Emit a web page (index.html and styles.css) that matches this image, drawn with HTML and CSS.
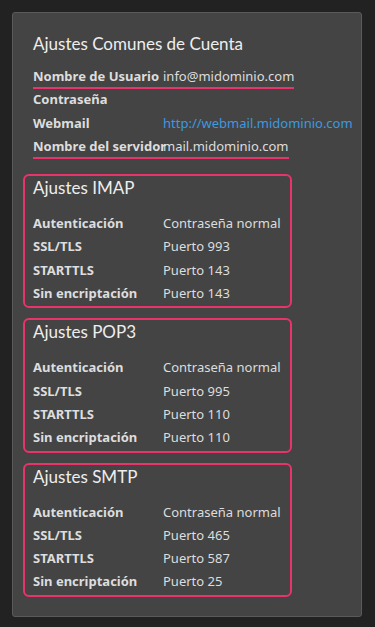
FILE: index.html
```html
<!DOCTYPE html>
<html lang="es">
<head>
  <meta charset="UTF-8">
  <title>Ajustes de Cuenta</title>
  <link rel="stylesheet" href="styles.css">
</head>
<body>

<div class="card">
  <h2>Ajustes Comunes de Cuenta</h2>
  <div class="row marked"><span class="label">Nombre de Usuario</span><span>info@midominio.com</span></div>
  <div class="row"><span class="label">Contraseña</span><span></span></div>
  <div class="row"><span class="label">Webmail</span><a href="#">http://webmail.midominio.com</a></div>
  <div class="row marked"><span class="label">Nombre del servidor</span><span>mail.midominio.com</span></div>

  <div class="box">
    <h3>Ajustes IMAP</h3>
    <div class="row"><span class="label">Autenticación</span><span>Contraseña normal</span></div>
    <div class="row"><span class="label">SSL/TLS</span><span>Puerto 993</span></div>
    <div class="row"><span class="label">STARTTLS</span><span>Puerto 143</span></div>
    <div class="row"><span class="label">Sin encriptación</span><span>Puerto 143</span></div>
  </div>

  <div class="box">
    <h3>Ajustes POP3</h3>
    <div class="row"><span class="label">Autenticación</span><span>Contraseña normal</span></div>
    <div class="row"><span class="label">SSL/TLS</span><span>Puerto 995</span></div>
    <div class="row"><span class="label">STARTTLS</span><span>Puerto 110</span></div>
    <div class="row"><span class="label">Sin encriptación</span><span>Puerto 110</span></div>
  </div>

  <div class="box">
    <h3>Ajustes SMTP</h3>
    <div class="row"><span class="label">Autenticación</span><span>Contraseña normal</span></div>
    <div class="row"><span class="label">SSL/TLS</span><span>Puerto 465</span></div>
    <div class="row"><span class="label">STARTTLS</span><span>Puerto 587</span></div>
    <div class="row"><span class="label">Sin encriptación</span><span>Puerto 25</span></div>
  </div>
</div>

</body>
</html>
```

FILE: styles.css
```css
* {
  box-sizing: border-box;
}

body {
  margin: 0;
  padding: 12px;
  background: #222;
  font-family: 'Noto Sans', sans-serif;
  color: #ddd;
  font-size: 13px;
}

.card {
  width: 350px;
  background: #444;
  border: 1px solid #5a5a5a;
  border-radius: 3px;
  padding: 20px 20px 19px 20px;
}

h2, h3 {
  margin: 0;
  font-family: Lato, sans-serif;
  font-size: 17px;
  font-weight: normal;
  line-height: 22px;
  color: #eee;
}

h2 {
  margin-bottom: 11px;
}

h3 {
  margin-bottom: 14px;
}

.row {
  display: grid;
  grid-template-columns: 130px auto;
  width: fit-content;
  line-height: 21.3px;
  border-bottom: 2px solid transparent;
  white-space: nowrap;
}

.row.marked {
  border-bottom-color: #e8336b;
}

.label {
  font-weight: bold;
}

.row a {
  color: #3b9ae0;
  text-decoration: none;
}

.box {
  width: 269px;
  margin: 15px 0 0 -10px;
  padding: 1px 8px 2px 8px;
  border: 2px solid #e8336b;
  border-radius: 6px;
}

.box .row:last-child {
  border-bottom: 0;
}

.box + .box {
  margin-top: 10px;
}
```
